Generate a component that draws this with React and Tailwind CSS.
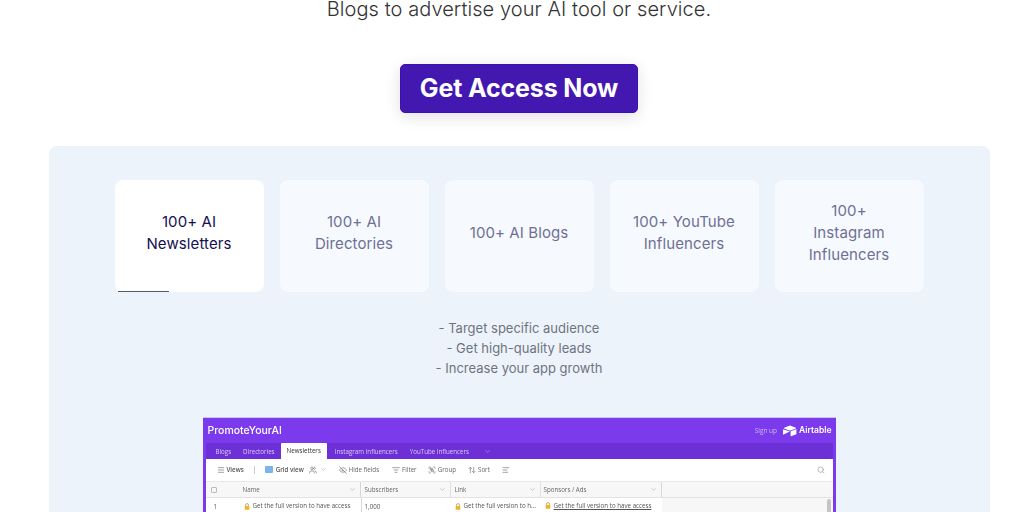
import { Menu, Users, EyeOff, ListFilter, Group, ArrowUpDown, AlignLeft, Search, ChevronDown } from "lucide-react";

const CARDS = [
  { label: "100+ AI Newsletters", active: true },
  { label: "100+ AI Directories" },
  { label: "100+ AI Blogs" },
  { label: "100+ YouTube Influencers" },
  { label: "100+ Instagram Influencers" },
];

const ICON = "w-[8px] h-[8px] shrink-0 text-[#777]";

function Chevron({ className = "" }) {
  return <ChevronDown className={`w-[7px] h-[7px] shrink-0 text-[#888] ${className}`} strokeWidth={1.5} />;
}

function Lock() {
  return (
    <svg viewBox="0 0 10 12" className="w-[6px] h-[7px] shrink-0">
      <path d="M2.5 5V3.5a2.5 2.5 0 0 1 5 0V5" fill="none" stroke="#a98b3c" strokeWidth="1.2" />
      <rect x="1" y="5" width="8" height="6.5" rx="1" fill="#f0b429" />
    </svg>
  );
}

function Airtable() {
  return (
    <svg viewBox="0 0 24 20" className="w-[14px] h-[12px]">
      <path d="M11 1 2 4.6c-.5.2-.5.9 0 1.1l9 3.6c.7.3 1.4.3 2 0l9-3.6c.5-.2.5-.9 0-1.1L13 1c-.7-.3-1.4-.3-2 0z" fill="#fff" />
      <path d="M13 11v7.6c0 .4.4.6.7.5l9-3.5c.2-.1.3-.3.3-.5V7.5c0-.4-.4-.6-.7-.5l-9 3.5c-.2.1-.3.3-.3.5z" fill="#fff" />
      <path d="M10.8 11.4 1 16c-.4.2-1-.1-1-.5V8c0-.4.6-.7 1-.5l9.8 3c.4.2.4.7 0 .9z" fill="#fff" />
    </svg>
  );
}

function Shot() {
  return (
    <div className="w-[633px] h-[140px] shrink-0 bg-[#7c3aed] border-t border-[#c9c4f2] px-[3px] text-[6.2px] font-['Open_Sans',sans-serif] text-[#666] blur-[0.35px]">
      <div className="h-[25px] flex items-center justify-between pl-[2px] pr-[1px] text-white">
        <span className="text-[10.5px] font-medium font-['Inter',sans-serif]">PromoteYourAI</span>
        <span className="flex items-center gap-[6px]">
          <span className="text-[6.5px] text-[#cbb8f8]">Sign up</span>
          <span className="flex items-center gap-[2px] font-semibold text-[8.5px] font-['Inter',sans-serif]">
            <Airtable />
            Airtable
          </span>
        </span>
      </div>
      <div className="h-[16px] bg-[#6d30d6] flex items-end text-[#d9ccf6] pl-[10px] whitespace-nowrap">
        <span className="h-[15px] flex items-center pr-[6px]">Blogs</span>
        <span className="h-[15px] flex items-center px-[6px]">Directories</span>
        <span className="h-[16px] flex items-center px-[6px] bg-white text-[#333] rounded-t-[1px]">Newsletters</span>
        <span className="h-[15px] flex items-center pl-[8px] pr-[6px]">Instagram Influencers</span>
        <span className="h-[15px] flex items-center px-[6px]">YouTube Influencers</span>
        <span className="h-[15px] flex items-center pl-[9px]">
          <ChevronDown className="w-[7px] h-[7px] text-[#d9ccf6]" strokeWidth={1.5} />
        </span>
      </div>
      <div className="bg-white">
        <div className="h-[23px] flex items-center pl-[11px] pr-[8px] border-b border-[#e8e8e8] whitespace-nowrap">
          <span className="flex items-center gap-[2px] font-semibold text-[#555]">
            <Menu className={ICON} />Views
          </span>
          <span className="w-px h-[8px] bg-[#ccc] ml-[10px]" />
          <span className="flex items-center gap-[3px] font-semibold text-[#555] ml-[10px]">
            <span className="w-[8px] h-[7px] rounded-[1px] bg-[#7db3ea]" />
            Grid view
            <Users className={`${ICON} ml-[2px]`} />
            <Chevron />
          </span>
          <span className="flex items-center gap-[2px] ml-[12px]">
            <EyeOff className={ICON} />Hide fields
          </span>
          <span className="flex items-center gap-[2px] ml-[13px]">
            <ListFilter className={ICON} />Filter
          </span>
          <span className="flex items-center gap-[2px] ml-[11px]">
            <Group className={ICON} />Group
          </span>
          <span className="flex items-center gap-[2px] ml-[12px]">
            <ArrowUpDown className={ICON} />Sort
          </span>
          <AlignLeft className={`${ICON} ml-[12px]`} />
          <span className="flex-1" />
          <Search className="w-[8px] h-[8px] text-[#999]" />
        </div>
        <div className="h-[16px] flex items-stretch bg-[#f7f7f7] border-b border-[#e3e3e3]">
          <div className="w-[37px] flex items-center pl-[5px]">
            <span className="w-[6px] h-[6px] border border-[#bbb] rounded-[1px]" />
          </div>
          <div className="w-[118px] flex items-center justify-between pr-[4px] border-r border-[#d8d8d8]">
            Name
            <Chevron />
          </div>
          <div className="w-[90px] flex items-center justify-between pl-[4px] pr-[4px] border-r border-[#e0e0e0]">
            Subscribers
            <Chevron />
          </div>
          <div className="w-[90px] flex items-center justify-between px-[4px] border-r border-[#e0e0e0]">
            Link
            <Chevron />
          </div>
          <div className="w-[121px] flex items-center justify-between pl-[3px] pr-[4px] border-r border-[#d8d8d8]">
            Sponsors / Ads
            <Chevron />
          </div>
        </div>
        <div className="h-[40px] flex items-stretch text-[#555]">
          <div className="w-[37px] pt-[4px] pl-[8px]">1</div>
          <div className="w-[118px] h-[16px] flex items-center gap-[3px] pl-[1px] whitespace-nowrap overflow-hidden">
            <Lock />
            Get the full version to have access
          </div>
          <div className="w-[90px] border-l border-[#d8d8d8] pl-[3px] pt-[4px]">1,000</div>
          <div className="w-[90px] h-[16px] flex items-center gap-[3px] pl-[4px] whitespace-nowrap overflow-hidden">
            <Lock />
            Get the full version to h...
          </div>
          <div className="w-[121px] h-[16px] flex items-center px-[4px] whitespace-nowrap overflow-hidden">
            <span className="flex items-center gap-[3px] underline">
              <Lock />
              Get the full version to have access
            </span>
          </div>
          <div className="flex-1 bg-[#f7f7f7] flex justify-end pr-[2px] pt-[1px]">
            <span className="w-[4px] h-full bg-[#c4c4c4] rounded-[2px]" />
          </div>
        </div>
      </div>
    </div>
  );
}

export default function App() {
  return (
    <div className="h-[512px] w-[1024px] overflow-hidden bg-white pl-[14px] flex flex-col items-center font-['Inter',sans-serif]">
      <p className="h-[18px] leading-[18px] text-[20px] font-light tracking-[0.07px] text-[#333] whitespace-nowrap">
        Blogs to advertise your AI tool or service.
      </p>
      <button className="mt-[46px] w-[238px] h-[49px] shrink-0 rounded-[5px] bg-[#4318b0] border border-[#3a10b8] text-white text-[25px] font-bold tracking-[-0.15px] shadow-[0_4px_16px_rgba(0,0,0,0.12)]">
        Get Access Now
      </button>
      <section className="mt-[33px] w-[941px] h-[400px] shrink-0 rounded-t-[8px] bg-[#ecf3fb] flex flex-col items-center pt-[34px]">
        <div className="flex gap-[16px]">
          {CARDS.map((c) => (
            <div
              key={c.label}
              className={`relative w-[149px] h-[112px] px-[22px] pb-[6px] rounded-[8px] flex items-center justify-center text-center text-[15px] leading-[22px] tracking-[0.1px] ${
                c.active ? "bg-white text-[#14104f]" : "bg-[#f6faff] text-[#6f6f95]"
              }`}
            >
              {c.label}
              {c.active && <span className="absolute left-[3px] bottom-0 w-[51px] h-[1.5px] bg-[#555a70]" />}
            </div>
          ))}
        </div>
        <div className="mt-[26px] text-center text-[13px] leading-[20px] text-[#6f7380]">
          <p>- Target specific audience</p>
          <p>- Get high-quality leads</p>
          <p>- Increase your app growth</p>
        </div>
        <div className="mt-[39px]">
          <Shot />
        </div>
      </section>
    </div>
  );
}
